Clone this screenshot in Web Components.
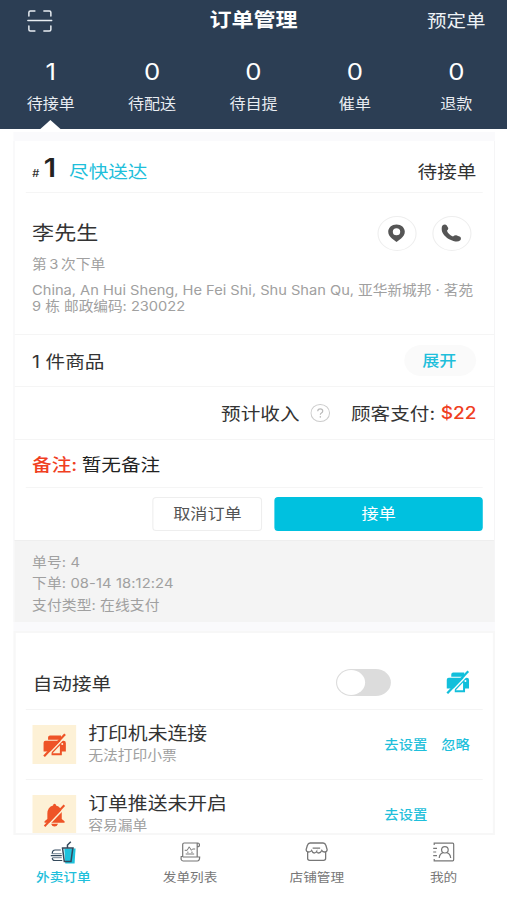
<!DOCTYPE html>
<html lang="zh-CN">

<head>
  <meta charset="UTF-8">
  <meta name="viewport" content="width=device-width, initial-scale=1.0">
  <title>订单管理</title>
  <style>
    body {
      margin: 0;
      height: 900px;
      overflow: hidden;
      background: #fff;
      font-family: Inter, "Noto Sans CJK SC", sans-serif;
      color: #333;
    }
  </style>
</head>

<body>

  <order-app>
    <app-header slot="header" heading="订单管理" action="预定单">
      <stat-tab count="1" active>待接单</stat-tab>
      <stat-tab count="0">待配送</stat-tab>
      <stat-tab count="0">待自提</stat-tab>
      <stat-tab count="0">催单</stat-tab>
      <stat-tab count="0">退款</stat-tab>
    </app-header>

    <order-card>
      <span slot="number">1</span>
      <span slot="when">尽快送达</span>
      <span slot="status">待接单</span>
      <span slot="name">李先生</span>
      <span slot="times">第 3 次下单</span>
      <span slot="address">China, An Hui Sheng, He Fei Shi, Shu Shan Qu, 亚华新城邦 · 茗苑<br>9 栋 邮政编码: 230022</span>
      <span slot="goods">1 件商品</span>
      <span slot="price">$22</span>
      <span slot="note">暂无备注</span>
      <div slot="meta">单号: 4</div>
      <div slot="meta">下单: 08-14 18:12:24</div>
      <div slot="meta">支付类型: 在线支付</div>
    </order-card>

    <settings-card>
      <alert-row icon="printer">
        打印机未连接
        <span slot="sub">无法打印小票</span>
        <span slot="link">去设置</span>
        <span slot="link">忽略</span>
      </alert-row>
      <alert-row icon="bell">
        订单推送未开启
        <span slot="sub">容易漏单</span>
        <span slot="link">去设置</span>
      </alert-row>
    </settings-card>

    <nav-item slot="nav" icon="meal" active>外卖订单</nav-item>
    <nav-item slot="nav" icon="list">发单列表</nav-item>
    <nav-item slot="nav" icon="shop">店铺管理</nav-item>
    <nav-item slot="nav" icon="me">我的</nav-item>
  </order-app>

  <script>

    // 图标: [宽, 高, 内容]
    const ICONS = {
      scan: [26, 24, `<g fill="none" stroke="#e8edf2" stroke-width="1.5" stroke-linecap="round">
        <path d="M2 7V3.5Q2 2 3.5 2H8M17 2h5.500Q24 2 24 3.500V7M2 17v3.500Q2 22 3.500 22H8M17 22h5.500Q24 22 24 20.500V17M1 11.500H25"/></g>`],
      pin: [18, 18, `<path fill="#555" fill-rule="evenodd" d="M9 .5C4.200.5.700 3.600.700 7.800c0 2.800 1.600 5 3.700 6.800L9 18l4.600-3.400c2.100-1.800 3.700-4 3.700-6.800C17.300 3.600 13.800.5 9 .5zM9 4.300a3.700 3.500 0 1 1 0 7a3.700 3.500 0 1 1 0-7z"/>`],
      phone: [20, 18, `<path fill="#555" d="M1.200 1.600C2.300.500 4.300.200 5.300 1.200L6.700 3.400C7.300 4.700 7 5.700 5.700 6.700C6.300 9 8.800 11.300 11.700 12.600C13 11.300 14.500 11 15.600 11.500L18.800 12.700C20 13.500 19.900 15.500 18.700 16.600C16.700 18.400 12.200 17.500 8.500 15.500C4.300 13.300 1.200 9.700.500 6.400C.100 4.400.300 2.600 1.200 1.600z"/>`],
      help: [20, 20, `<ellipse cx="10" cy="10" rx="9.300" ry="8.600" fill="none" stroke="#ccc"/>
        <path d="M7.500 8.300Q7.500 5.900 10 5.900T12.500 8Q12.500 9.200 11.200 10Q10.100 10.700 10.100 11.800" fill="none" stroke="#bbb" stroke-width="1.200"/><circle cx="10.100" cy="13.900" r=".8" fill="#bbb"/>`],
      printer: [24, 24, `<path fill="currentColor" d="M7.500 2.500H18.500V6.700H5.500V4.500Q5.500 2.500 7.500 2.500zM3 7.700H21Q23.300 7.700 23.300 10V18.500H19.300V22.200H9V18.500H1V9.700Q1 7.700 3 7.700z"/>
        <path d="M10 20.200L17.300 12.500V20.200z" fill="var(--bg, #fff)"/>
        <path d="M3.200 24.300L24.300 2.400" stroke="var(--bg, #fff)" stroke-width="1.500"/>
        <path d="M1.500 23.300L22.500 1.200" stroke="currentColor" stroke-width="2.200"/>
        <circle cx="19.700" cy="11" r="1" fill="var(--bg, #fff)"/>`],
      bell: [24, 24, `<path fill="currentColor" d="M12 .8Q13.500.8 13.500 2.500Q19 4 19.200 10.500V16L22 18.300V19.800H2V18.300L4.800 16V10.500Q5 4 10.500 2.500Q10.500.8 12 .8zM8.500 20.800h7Q14.700 23.500 12 23.500T8.500 20.800z"/>
        <path d="M3.300 24.500L23 4" stroke="var(--bg, #fff)" stroke-width="1.600"/>
        <path d="M2 23.300L21.800 2.300" stroke="currentColor" stroke-width="2"/>`],
      meal: [28, 24, `<path d="M15 8.500H26.300L25.300 23.500H16z" fill="#1fc3de"/>
        <g fill="none" stroke="#34495c" stroke-width="1.200">
        <path d="M11.500 10H6Q3 10 3 13.500H12M1.500 15.700H12.500M3 18Q3 20.500 5.500 20.500H13"/>
        <path d="M3 13.700H12M3 17.600H12.500" stroke="#8d9aa6"/>
        <path d="M12.500 8H24.500M13.300 8.300L15 21.500H21.700L23.500 8.300M18.200 7.500V5L21.500 1.800" stroke-width="1.500"/></g>`],
      list: [22, 22, `<g fill="none" stroke="#777" stroke-width="1.200">
        <path d="M3.500 16V3.500Q3.500 2 5 2H18.500Q20.300 2 20.300 4T18 5.500M18 2.500V16M3.500 15.500H2Q1.300 20 4 20H18Q20.500 20 20.500 16H3.500"/>
        <path d="M5.500 9.300H8L10 5.800L12.200 9.300L13.300 8H16M6.500 13H15M8 11.200H9.300M12 11.200H13.500" stroke-width="1"/></g>`],
      shop: [24, 22, `<g fill="none" stroke="#777" stroke-width="1.300">
        <path d="M5.500 2H18.500Q20.500 2 21.300 4.500L22.500 8.500Q22.500 11 20 11Q18 11 17.200 9.500Q16 12 14 12T12 10.500Q11 12 9.500 12T7 9.500Q6 11 4 11Q1.500 11 1.500 8.500L2.700 4.500Q3.500 2 5.500 2z"/>
        <path d="M3 11V17.500Q3 19.300 5 19.300H19Q21 19.300 21 17.500V11M8 7.200H15.500"/></g>`],
      me: [24, 22, `<g fill="none" stroke="#777" stroke-width="1.200">
        <path d="M3 4V2.200H21.500Q22.500 2.200 22.500 3.500V18.500Q22.500 19.800 21.500 19.800H3V18M2 7.300H5.800M2 11H5M2 14.700H5.800"/>
        <ellipse cx="13.700" cy="8.800" rx="3.300" ry="3.200"/><path d="M8 17Q8.500 12.500 12 11.700M15.500 11.700Q19 12.500 19.500 17"/></g>`],
    };

    // 全局横向拉伸 1.12，这里把屏幕宽度换算回来
    const px = (n) => (n / 1.12).toFixed(2) + 'px';

    const icon = (name) => {
      const [w, h, body] = ICONS[name];
      return `<svg viewBox="0 0 ${w} ${h}" preserveAspectRatio="none" style="display:block;flex:none;width:${px(w)};height:${h}px">${body}</svg>`;
    };

    class OrderApp extends HTMLElement {
      connectedCallback() {
        this.attachShadow({ mode: 'open' });
        this.shadowRoot.innerHTML = `
        <style>
          :host {
            display: flex;
            flex-direction: column;
            width: ${px(507)};
            height: 900px;
            transform: scaleX(1.12);
            transform-origin: 0 0;
            white-space: nowrap;
          }
          main {
            flex: 1;
            min-height: 0;
            overflow: hidden;
            padding: 3px ${px(12)} 0 ${px(13.5)};
          }
          .tint { background: #fafafc; padding-top: 9px; }
          nav {
            display: grid;
            grid-template-columns: repeat(4, 1fr);
            height: 65px;
            background: #fff;
          }
        </style>
        <slot name="header"></slot>
        <main><div class="tint"><slot></slot></div></main>
        <nav><slot name="nav"></slot></nav>`;
      }
    }
    customElements.define('order-app', OrderApp);


    class AppHeader extends HTMLElement {
      connectedCallback() {
        this.attachShadow({ mode: 'open' });
        this.shadowRoot.innerHTML = `
        <style>
          :host { display: block; height: 129px; background: #2c3e54; color: #fff; }
          .bar {
            display: grid;
            grid-template-columns: 1fr auto 1fr;
            align-items: center;
            height: 41px;
            padding: 0 ${px(21.500)};
          }
          .scan { margin-left: ${px(5.500)}; }
          h1 { margin: 0; font-size: 19.700px; font-weight: 700; line-height: 41px; }
          .action { justify-self: end; font-size: 17.400px; color: #eef2f6; margin-top: -2px; }
          .tabs { display: grid; grid-template-columns: repeat(5, 1fr); height: 88px; }
        </style>
        <div class="bar">
          <span class="scan">${icon('scan')}</span>
          <h1>${this.getAttribute('heading')}</h1>
          <span class="action">${this.getAttribute('action')}</span>
        </div>
        <div class="tabs"><slot></slot></div>`;
      }
    }
    customElements.define('app-header', AppHeader);


    class StatTab extends HTMLElement {
      connectedCallback() {
        this.attachShadow({ mode: 'open' });
        this.shadowRoot.innerHTML = `
        <style>
          :host { display: flex; flex-direction: column; align-items: center; height: 88px; }
          b { font-weight: 400; font-size: 23px; line-height: 30px; margin-top: 16px; }
          span { font-size: 14.300px; line-height: 20px; margin-top: 7px; color: #e9edf2; }
          i { width: 0; height: 0; margin-top: auto; border: solid transparent; border-width: 0 ${px(11)} 9px; }
          :host([active]) i { border-bottom-color: #fff; }
        </style>
        <b>${this.getAttribute('count')}</b><span><slot></slot></span><i></i>`;
      }
    }
    customElements.define('stat-tab', StatTab);


    class OrderCard extends HTMLElement {
      connectedCallback() {
        this.attachShadow({ mode: 'open' });
        this.shadowRoot.innerHTML = `
        <style>
          :host {
            display: block;
            box-sizing: border-box;
            height: 481px;
            background: #fff;
            border: solid #f5f5f6;
            border-width: 0 1.500px 0 1px;
            font-size: 17.500px;
          }
          .row { display: flex; align-items: center; box-sizing: border-box; padding: 0 ${px(17.500)} 1px; border-bottom: 1.500px solid #f5f5f5; }
          .inset { margin: 0 ${px(11)}; padding: 0 ${px(6.500)} 1px; }
          .head { height: 52px; padding-top: 8px; }
          .hash { font-size: 10px; font-weight: 500; font-style: italic; margin-top: 5px; }
          .num { font-size: 26px; font-weight: 600; color: #222; margin: -6px 0 0 4px; }
          .when { color: #1fbfdb; margin-left: ${px(13)}; }
          .right { margin-left: auto; }
          .customer { height: 142px; display: block; padding-top: 22px; }
          .who { display: flex; align-items: center; height: 36px; }
          .name { font-size: 19.700px; margin: -3px auto 0 0; }
          .round {
            display: grid;
            place-items: center;
            box-sizing: border-box;
            width: 35px;
            height: 35px;
            border: 1px solid #eee;
            border-radius: 50%;
            margin: 0 ${px(5)} 0 ${px(11)};
          }
          .grey { color: #a0a0a0; font-size: 13.200px; }
          .times { line-height: 20px; margin-top: 3px; word-spacing: -1.500px; }
          .address { font-size: 13.100px; line-height: 15.600px; margin-top: 9px; letter-spacing: -.02px; }
          .goods { height: 52px; }
          .pill {
            width: ${px(72)};
            line-height: 31px;
            border-radius: 16px;
            background: #fafafa;
            color: #1fbfdb;
            font-size: 15.300px;
            font-weight: 500;
            text-align: center;
            text-indent: -2px;
          }
          .money { height: 53px; justify-content: flex-end; }
          .money svg { margin: 0 ${px(20.500)} 0 ${px(11)}; }
          .price { color: #f0401f; font-weight: 500; font-size: 17px; margin-left: 5px; }
          .note { height: 48px; color: #222; }
          .note b { font-weight: 500; color: #f0401f; margin-right: 4px; }
          .buttons { display: flex; justify-content: flex-end; gap: ${px(12.500)}; height: 52px; padding: 8.500px ${px(11.500)} 0; box-sizing: border-box; }
          button {
            box-sizing: border-box;
            height: 34px;
            padding: 0 0 3px;
            font: 15.300px Inter, "Noto Sans CJK SC", sans-serif;
            border: 1px solid #eee;
            border-radius: 3.500px;
            background: #fff;
            color: #555;
          }
          .cancel { width: ${px(110)}; }
          .accept { width: ${px(207.500)}; background: #00c1df; border-color: #00c1df; color: #fff; }
          .meta { box-sizing: border-box; height: 82px; padding: 10.500px ${px(17.500)}; line-height: 21.700px; background: #f4f4f4; border-top: 1px solid #eee; letter-spacing: .08px; }
        </style>
        <div class="row inset head">
          <span class="hash">#</span><span class="num"><slot name="number"></slot></span>
          <span class="when"><slot name="when"></slot></span>
          <span class="right"><slot name="status"></slot></span>
        </div>
        <div class="row customer">
          <div class="who">
            <span class="name"><slot name="name"></slot></span>
            <span class="round">${icon('pin')}</span><span class="round">${icon('phone')}</span>
          </div>
          <div class="grey times"><slot name="times"></slot></div>
          <div class="grey address"><slot name="address"></slot></div>
        </div>
        <div class="row goods"><slot name="goods"></slot><span class="right pill">展开</span></div>
        <div class="row money">
          <span>预计收入</span>${icon('help')}<span>顾客支付:</span><span class="price"><slot name="price"></slot></span>
        </div>
        <div class="row inset note"><b>备注:</b><slot name="note"></slot></div>
        <div class="buttons"><button class="cancel">取消订单</button><button class="accept">接单</button></div>
        <div class="grey meta"><slot name="meta"></slot></div>`;
      }
    }
    customElements.define('order-card', OrderCard);


    class SettingsCard extends HTMLElement {
      connectedCallback() {
        this.attachShadow({ mode: 'open' });
        this.shadowRoot.innerHTML = `
        <style>
          :host {
            display: block;
            box-sizing: border-box;
            height: 204px;
            margin-top: 9px;
            overflow: hidden;
            background: #fff;
            border: 2px solid #f7f7f7;
          }
          .auto {
            display: flex;
            align-items: center;
            box-sizing: border-box;
            height: 77px;
            margin: 0 ${px(10)};
            padding: 22px ${px(13)} 0 ${px(7)};
            border-bottom: 1.500px solid #f4f4f4;
            font-size: 17.500px;
          }
          .switch {
            box-sizing: border-box;
            width: ${px(55)};
            height: 27px;
            margin: 0 ${px(55)} 0 auto;
            padding: 1px;
            border-radius: 14px;
            background: #dcdcdc;
          }
          .switch i { display: block; width: ${px(28.500)}; height: 25px; border-radius: 13px; background: #fff; }
          .printer { color: #12bfdb; }
        </style>
        <div class="auto"><span>自动接单</span><span class="switch"><i></i></span><span class="printer">${icon('printer')}</span></div>
        <slot></slot>`;
      }
    }
    customElements.define('settings-card', SettingsCard);


    class AlertRow extends HTMLElement {
      connectedCallback() {
        this.attachShadow({ mode: 'open' });
        this.shadowRoot.innerHTML = `
        <style>
          :host {
            display: flex;
            align-items: center;
            box-sizing: border-box;
            height: 70px;
            margin: 0 ${px(10)};
            padding: 0 ${px(13)} 0 ${px(7)};
            border-bottom: 1.500px solid #f4f4f4;
          }
          .icon { --bg: #fdf1d6; display: grid; place-items: center; width: ${px(43.500)}; height: 39px; background: var(--bg); color: #ee5327; }
          .text { margin: -3px auto 0 ${px(12)}; font-size: 17.700px; line-height: 23px; }
          .sub { font-size: 13.200px; line-height: 20px; color: #a0a0a0; }
          .links { display: grid; grid-template-columns: ${px(57)} ${px(28.500)}; margin-top: -3px; font-size: 12.800px; font-weight: 500; color: #1fbfdb; }
        </style>
        <div class="icon">${icon(this.getAttribute('icon'))}</div>
        <div class="text"><slot></slot><div class="sub"><slot name="sub"></slot></div></div>
        <div class="links"><slot name="link"></slot></div>`;
      }
    }
    customElements.define('alert-row', AlertRow);


    class NavItem extends HTMLElement {
      connectedCallback() {
        this.attachShadow({ mode: 'open' });
        this.shadowRoot.innerHTML = `
        <style>
          :host { display: flex; flex-direction: column; align-items: center; color: #777; font-size: 12.200px; }
          .icon { display: grid; place-items: center; height: 24px; margin-top: 5px; }
          .label { line-height: 18px; margin-top: 5px; }
          :host([active]) { color: #1fbfdb; }
          :host([active]) .label { font-weight: 500; }
        </style>
        <div class="icon">${icon(this.getAttribute('icon'))}</div>
        <div class="label"><slot></slot></div>`;
      }
    }
    customElements.define('nav-item', NavItem);

  </script>

</body>

</html>
